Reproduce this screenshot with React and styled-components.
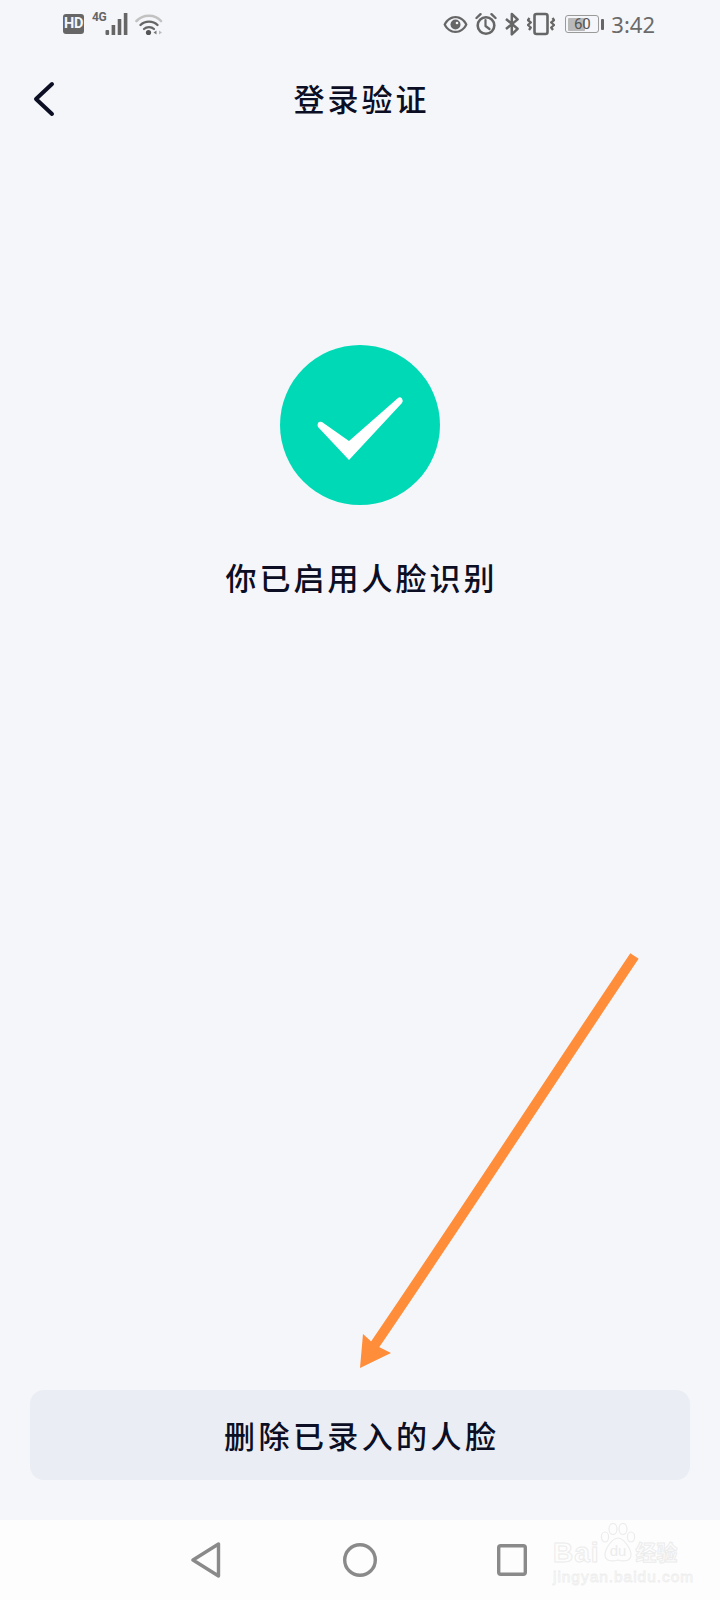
import React from "react";
import styled, { createGlobalStyle } from "styled-components";

const GlobalStyle = createGlobalStyle`
  html, body { margin: 0; padding: 0; background: #f5f6fa; }
  * { box-sizing: border-box; }
`;

const CJK = `"Noto Sans CJK SC", "Noto Sans", sans-serif`;
const GREY = "#666";

const Page = styled.div`
  position: relative;
  width: 720px;
  height: 1600px;
  display: flex;
  flex-direction: column;
  background: #f5f6fa;
  color: #0c0e24;
  font-family: ${CJK};
  overflow: hidden;
`;

const StatusBar = styled.div`
  height: 48px;
  flex: none;
  display: flex;
  align-items: center;
  justify-content: space-between;
  padding: 0 65px 0 63px;
  color: ${GREY};
`;

const StatusGroup = styled.div`
  display: flex;
  align-items: center;
`;

const HdBadge = styled.span`
  width: 21px;
  height: 20px;
  display: flex;
  align-items: center;
  justify-content: center;
  background: ${GREY};
  border-radius: 3px;
  color: #f5f6fa;
  font: 700 14.5px/1 "Roboto", sans-serif;
  letter-spacing: -0.4px;
`;

const NetworkLabel = styled.span`
  width: 13px;
  margin: -15px 0 0 8px;
  font: 700 12px/1 "Roboto", sans-serif;
  letter-spacing: -0.5px;
  white-space: nowrap;
`;

const StatusIcon = styled.svg`
  display: block;
  flex: none;
  margin-left: ${(p) => p.$ml || 0}px;
`;

const Battery = styled.div`
  position: relative;
  width: 34px;
  height: 18px;
  margin-left: 10px;
  border: 1.5px solid #9a9a9a;
  border-radius: 3px;
  padding: 1.5px;
  display: flex;
`;

const BatteryFill = styled.div`
  height: 100%;
  background: #b9b9b9;
  border-radius: 1px;
`;

const BatteryText = styled.span`
  position: absolute;
  inset: 0;
  display: flex;
  align-items: center;
  justify-content: center;
  font: 400 15px/1 "Roboto", sans-serif;
  color: #555;
`;

const BatteryNub = styled.div`
  width: 3px;
  height: 11px;
  margin-left: 2px;
  background: ${GREY};
  border-radius: 1px;
`;

const Clock = styled.span`
  margin-left: 7px;
  font: 400 22px/1 "Noto Sans", sans-serif;
  color: #6a6a6a;
`;

const Header = styled.header`
  height: 102px;
  flex: none;
  display: grid;
  grid-template-columns: 80px 1fr 80px;
  align-items: center;
`;

const BackButton = styled.button`
  width: 80px;
  height: 102px;
  padding: 0;
  border: 0;
  background: none;
  display: flex;
  align-items: center;
`;

const Title = styled.h1`
  margin: 0 0 3px;
  text-align: center;
  font: 500 31px/40px ${CJK};
  letter-spacing: 3px;
  text-indent: 3px;
`;

const Content = styled.main`
  flex: 1;
  display: flex;
  flex-direction: column;
  align-items: center;
  padding-top: 195px;
`;

const SuccessBadge = styled.div`
  width: 160px;
  height: 160px;
  border-radius: 50%;
  background: #00d9b5;
  display: flex;
  align-items: center;
  justify-content: center;
`;

const Message = styled.p`
  margin: 52px 0 0;
  font: 500 31px/40px ${CJK};
  letter-spacing: 3px;
  text-indent: 3px;
`;

const DeleteButton = styled.button`
  flex: none;
  height: 90px;
  margin: 0 30px 40px;
  border: 0;
  border-radius: 14px;
  background: #eaedf4;
  color: #0c0e24;
  font: 500 31px/40px ${CJK};
  letter-spacing: 3.4px;
  text-indent: 3.4px;
`;

const NavBar = styled.nav`
  position: relative;
  flex: none;
  height: 80px;
  background: #fdfdfd;
  display: flex;
  align-items: center;
  gap: 120px;
  padding-left: 191px;
`;

const Annotation = styled.svg`
  position: absolute;
  left: 350px;
  top: 950px;
  pointer-events: none;
`;

const Watermark = styled.div`
  position: absolute;
  left: 553px;
  top: 3px;
  width: 130px;
  display: flex;
  flex-direction: column;
  color: transparent;
  pointer-events: none;
`;

const WatermarkRow = styled.div`
  display: flex;
  align-items: flex-end;
  height: 40px;
`;

const WatermarkBrand = styled.span`
  font: 700 ${(p) => p.$size}px/20px "Liberation Sans", ${CJK};
  letter-spacing: ${(p) => p.$spacing || 0}px;
  -webkit-text-stroke: 1px #ececec;
  white-space: nowrap;
`;

const WatermarkUrl = styled.span`
  margin-top: 6px;
  font: 400 15.5px/15px "Liberation Sans", sans-serif;
  letter-spacing: 0.95px;
  -webkit-text-stroke: 0.8px #eeeeee;
  white-space: nowrap;
`;

export default function App() {
  return (
    <Page>
      <GlobalStyle />
      <StatusBar>
        <StatusGroup>
          <HdBadge>HD</HdBadge>
          <NetworkLabel>4G</NetworkLabel>
          <StatusIcon width="24" height="24" viewBox="0 0 24 24" fill={GREY}>
            <rect x="0.5" y="18" width="3.6" height="5" rx="1" />
            <rect x="6.6" y="13" width="3.6" height="10" />
            <rect x="12.7" y="7" width="3.6" height="16" />
            <rect x="18.8" y="1" width="3.6" height="22" />
          </StatusIcon>
          <StatusIcon $ml="6" width="28" height="24" viewBox="0 0 28 24" fill="none">
            <path d="M1.5 9C8 2 20 2 26 9" stroke="#c2c2c2" strokeWidth="2.6" strokeLinecap="round" />
            <path d="M5.5 13C10 8.5 18 8.5 22.5 13" stroke={GREY} strokeWidth="2.4" strokeLinecap="round" />
            <path d="M9 17C11.5 14.5 16.5 14.5 19 17" stroke={GREY} strokeWidth="2.2" strokeLinecap="round" />
            <circle cx="13.5" cy="20.5" r="2.6" fill="#555" />
            <path d="M21.5 18.5v4l-3-2z" fill="#777" />
            <path d="M24 18.5v4l3-2z" fill="#bdbdbd" />
          </StatusIcon>
        </StatusGroup>
        <StatusGroup>
          <StatusIcon width="25" height="24" viewBox="0 0 25 24">
            <path d="M0.5 12.5C3 7 7.5 4 12.5 4S22 7 24.5 12.5C22 18 17.5 21 12.5 21S3 18 .5 12.5Z" fill={GREY} />
            <path d="M3 12.5C5 8.5 8.5 6.2 12.5 6.2S20 8.5 22 12.5C20 16.5 16.5 18.8 12.5 18.8S5 16.5 3 12.5Z" fill="#f5f6fa" />
            <circle cx="12.5" cy="12.5" r="5" fill={GREY} />
            <circle cx="14" cy="11" r="1.3" fill="#f5f6fa" />
          </StatusIcon>
          <StatusIcon $ml="7" width="22" height="24" viewBox="0 0 22 24" fill="none" stroke={GREY} strokeLinecap="round" strokeLinejoin="round">
            <circle cx="11" cy="13.5" r="8.3" strokeWidth="2.6" />
            <path d="M10.5 8v6l4 3" strokeWidth="2.2" />
            <path d="M1.5 6L5.5 2.2M20.5 6L16.5 2.2" strokeWidth="2.4" />
          </StatusIcon>
          <StatusIcon $ml="8" width="14" height="24" viewBox="0 0 14 24" fill="none" stroke={GREY} strokeWidth="2.5" strokeLinejoin="round">
            <path d="M1 7L12.6 16.8L6.8 22.4V2L12.6 7.4L1 17" />
          </StatusIcon>
          <StatusIcon $ml="8" width="28" height="24" viewBox="0 0 28 24" fill="none" stroke={GREY} strokeLinejoin="round">
            <rect x="7.5" y="2" width="13" height="20" rx="2" strokeWidth="2.6" />
            <path d="M2.5 6L.9 8.2L3.8 10.5L.9 13L3.8 15.5L2 18" strokeWidth="2.3" />
            <path d="M25.5 6L27.1 8.2L24.2 10.5L27.1 13L24.2 15.5L26 18" strokeWidth="2.3" />
          </StatusIcon>
          <Battery>
            <BatteryFill style={{ width: "60%" }} />
            <BatteryText>60</BatteryText>
          </Battery>
          <BatteryNub />
          <Clock>3:42</Clock>
        </StatusGroup>
      </StatusBar>

      <Header>
        <BackButton aria-label="返回">
          <svg width="80" height="102" viewBox="0 0 80 102" fill="none" stroke="#0c0e24" strokeWidth="4" strokeLinecap="round" strokeLinejoin="round">
            <path d="M52 36L36 51L52 66" />
          </svg>
        </BackButton>
        <Title>登录验证</Title>
      </Header>

      <Content>
        <SuccessBadge>
          <svg width="160" height="160" viewBox="0 0 160 160" fill="#fff">
            <path d="M38 78Q39 76 42 77L69 96L118 53Q120 51.5 122 53.5Q123.5 56 122 58L69 115L38 82Q37 80 38 78Z" />
          </svg>
        </SuccessBadge>
        <Message>你已启用人脸识别</Message>
      </Content>

      <DeleteButton>删除已录入的人脸</DeleteButton>

      <NavBar>
        <svg width="32" height="36" viewBox="0 0 32 36" fill="none" stroke="#8a8a8a" strokeWidth="3.4" strokeLinejoin="round">
          <path d="M2 18L27.5 2V34Z" />
        </svg>
        <svg width="34" height="36" viewBox="0 0 34 36" fill="none" stroke="#8a8a8a" strokeWidth="3.4">
          <circle cx="17" cy="18" r="15.3" />
        </svg>
        <svg width="30" height="32" viewBox="0 0 30 32" fill="none" stroke="#8a8a8a" strokeWidth="3.4" strokeLinejoin="round">
          <rect x="1.7" y="1.7" width="26.6" height="28.6" rx="2" />
        </svg>
        <Watermark>
          <WatermarkRow>
            <WatermarkBrand $size={28} $spacing={1}>Bai</WatermarkBrand>
            <svg width="36" height="40" viewBox="0 0 36 40" fill="none" stroke="#ececec" strokeWidth="1.2">
              <ellipse cx="5" cy="14" rx="3.6" ry="5" />
              <ellipse cx="13" cy="6" rx="4" ry="5.5" />
              <ellipse cx="23" cy="6" rx="4" ry="5.5" />
              <ellipse cx="31" cy="14" rx="3.6" ry="5" />
              <path d="M18 15C24 15 31 26 31 32C31 38 24 39 18 37C12 39 5 38 5 32C5 26 12 15 18 15Z" />
              <text x="18" y="33" textAnchor="middle" fontSize="15" fontFamily="Liberation Sans" fill="#ececec" stroke="none">du</text>
            </svg>
            <WatermarkBrand $size={21}>经验</WatermarkBrand>
          </WatermarkRow>
          <WatermarkUrl>jingyan.baidu.com</WatermarkUrl>
        </Watermark>
      </NavBar>

      <Annotation width="300" height="430" viewBox="0 0 300 430">
        <path d="M284.5 6C221 100 110 270 24 396" fill="none" stroke="#ff8d3a" strokeWidth="10" />
        <path d="M10 418L13 384L25 395L41 403Z" fill="#ff8d3a" />
      </Annotation>
    </Page>
  );
}
